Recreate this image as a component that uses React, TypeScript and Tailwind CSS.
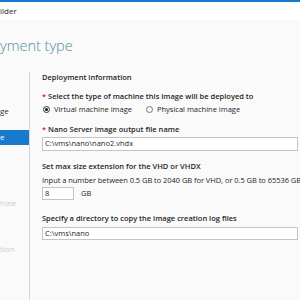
export default function App() {
  return (
    <div className="w-[300px] h-[300px] overflow-hidden bg-[#fafafa] text-[#1e1e1e] font-['Open_Sans',sans-serif] flex flex-col">
      <div className="h-[2px] bg-[#1979ca] shrink-0" />
      <div className="h-[18px] bg-white flex items-center text-[8px] leading-none text-[#222] shrink-0">
        ilder
      </div>
      <div className="h-[52px] shrink-0 pt-[16px] text-[14.5px] leading-[20px] font-light text-[#4f8f9c] whitespace-nowrap">
        yment type
      </div>
      <div className="flex flex-1">
        <nav className="w-[30px] shrink-0 border-r border-[#d6d6d6] flex flex-col text-[8px] leading-[14px]">
          <div className="mt-[32px] h-[14px] text-[#333]">ge</div>
          <div className="mt-[12px] h-[15px] bg-[#1979ca] text-white">e</div>
          <div className="mt-[51px] h-[14px] text-[#cccccc]">hine</div>
          <div className="mt-[32px] h-[14px] text-[#cccccc]">tion</div>
        </nav>
        <div className="flex-1 pl-[12px] flex flex-col text-[7.5px] whitespace-nowrap">
          <div className="leading-[10px] font-semibold">Deployment information</div>
          <div className="mt-[9px] leading-[10px] font-semibold">
            <span className="text-[#e81123]">*</span> Select the type of machine this image will be deployed to
          </div>
          <div className="mt-[3px] h-[10px] flex items-center leading-[10px]">
            <span className="w-[7px] h-[7px] ml-[1px] rounded-full border border-[#333] flex items-center justify-center">
              <span className="w-[3px] h-[3px] rounded-full bg-[#111]" />
            </span>
            <span className="ml-[4px]">Virtual machine image</span>
            <span className="ml-[14px] w-[7px] h-[7px] rounded-full border border-[#777]" />
            <span className="ml-[4px]">Physical machine image</span>
          </div>
          <div className="mt-[10px] leading-[10px] font-semibold">
            <span className="text-[#e81123]">*</span> Nano Server image output file name
          </div>
          <div className="mt-[3px] h-[14px] w-[256px] bg-white border border-[#c4c4c4] flex items-center pl-[2px] leading-none">
            C:\vms\nano\nano2.vhdx
          </div>
          <div className="mt-[10px] leading-[10px] font-semibold">Set max size extension for the VHD or VHDX</div>
          <div className="mt-[4px] leading-[10px] tracking-[-0.05px]">
            Input a number between 0.5 GB to 2040 GB for VHD, or 0.5 GB to 65536 GB
          </div>
          <div className="mt-[2px] h-[13px] flex items-center">
            <div className="w-[32px] h-[13px] bg-white border border-[#c4c4c4] flex items-center pl-[2px] leading-none">8</div>
            <span className="ml-[7px] leading-none">GB</span>
          </div>
          <div className="mt-[13px] leading-[10px] font-semibold">Specify a directory to copy the image creation log files</div>
          <div className="mt-[4px] h-[13px] w-[256px] bg-white border border-[#c4c4c4] flex items-center pl-[2px] leading-none">
            C:\vms\nano
          </div>
        </div>
      </div>
    </div>
  );
}
